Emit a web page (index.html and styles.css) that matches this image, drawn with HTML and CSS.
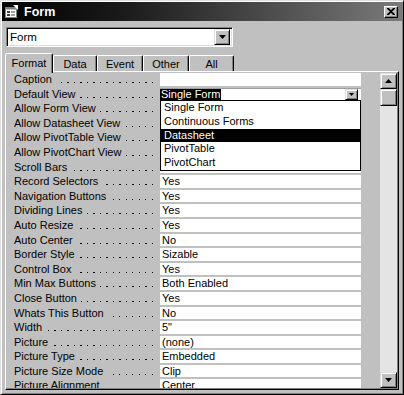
FILE: index.html
```html
<!DOCTYPE html>
<html lang="en">
<head>
    <meta charset="UTF-8">
    <title>Form</title>
    <link rel="stylesheet" href="styles.css">
</head>
<body>
    <div class="window">
        <div class="titlebar">
            <svg class="appicon" width="13" height="13" viewBox="0 0 13 13">
                <rect x="0.5" y="2.5" width="11" height="10" fill="#fff" stroke="#808080"/>
                <rect x="0.5" y="2.5" width="11" height="2" fill="#808080"/>
                <rect x="2" y="6" width="3" height="2" fill="#404040"/>
                <rect x="6" y="6" width="4" height="2" fill="#a0a0a0"/>
                <rect x="2" y="9" width="3" height="2" fill="#404040"/>
                <rect x="6" y="9" width="4" height="2" fill="#a0a0a0"/>
                <path d="M8 0h5v5z" fill="#fff"/>
            </svg>
            <span class="title">Form</span>
            <div class="closebtn">
                <svg width="8" height="7" viewBox="0 0 8 7"><path d="M0 0L7 7M1 0L8 7M7 0L0 7M8 0L1 7" stroke="#000" stroke-width="1.2"/></svg>
            </div>
        </div>

        <div class="content">
            <div class="objsel">
                <span class="objname">Form</span>
                <div class="btn3d ddbtn">
                    <svg width="7" height="4" viewBox="0 0 7 4"><path d="M0 0h7L3.5 4z" fill="#000"/></svg>
                </div>
            </div>

            <div class="tabs">
                <div class="tab on">Format</div>
                <div class="tab">Data</div>
                <div class="tab">Event</div>
                <div class="tab">Other</div>
                <div class="tab">All</div>
            </div>

            <div class="page">
                <div class="props">
                    <div class="row"><div class="name"><span>Caption</span></div><div class="val"></div></div>
                    <div class="row"><div class="name"><span>Default View</span></div>
                        <div class="val combo">
                            <span class="sel">Single Form</span>
                            <div class="btn3d minibtn">
                                <svg width="5" height="3" viewBox="0 0 5 3"><path d="M0 0h5L2.5 3z" fill="#000"/></svg>
                            </div>
                            <div class="list">
                                <div class="item">Single Form</div>
                                <div class="item">Continuous Forms</div>
                                <div class="item hl">Datasheet</div>
                                <div class="item">PivotTable</div>
                                <div class="item">PivotChart</div>
                            </div>
                        </div>
                    </div>
                    <!-- these values sit under the open list -->
                    <div class="row"><div class="name"><span>Allow Form View</span></div><div class="val"></div></div>
                    <div class="row"><div class="name"><span>Allow Datasheet View</span></div><div class="val"></div></div>
                    <div class="row"><div class="name"><span>Allow PivotTable View</span></div><div class="val"></div></div>
                    <div class="row"><div class="name"><span>Allow PivotChart View</span></div><div class="val"></div></div>
                    <div class="row"><div class="name"><span>Scroll Bars</span></div><div class="val">Both</div></div>
                    <div class="row"><div class="name"><span>Record Selectors</span></div><div class="val">Yes</div></div>
                    <div class="row"><div class="name"><span>Navigation Buttons</span></div><div class="val">Yes</div></div>
                    <div class="row"><div class="name"><span>Dividing Lines</span></div><div class="val">Yes</div></div>
                    <div class="row"><div class="name"><span>Auto Resize</span></div><div class="val">Yes</div></div>
                    <div class="row"><div class="name"><span>Auto Center</span></div><div class="val">No</div></div>
                    <div class="row"><div class="name"><span>Border Style</span></div><div class="val">Sizable</div></div>
                    <div class="row"><div class="name"><span>Control Box</span></div><div class="val">Yes</div></div>
                    <div class="row"><div class="name"><span>Min Max Buttons</span></div><div class="val">Both Enabled</div></div>
                    <div class="row"><div class="name"><span>Close Button</span></div><div class="val">Yes</div></div>
                    <div class="row"><div class="name"><span>Whats This Button</span></div><div class="val">No</div></div>
                    <div class="row"><div class="name"><span>Width</span></div><div class="val">5"</div></div>
                    <div class="row"><div class="name"><span>Picture</span></div><div class="val">(none)</div></div>
                    <div class="row"><div class="name"><span>Picture Type</span></div><div class="val">Embedded</div></div>
                    <div class="row"><div class="name"><span>Picture Size Mode</span></div><div class="val">Clip</div></div>
                    <div class="row"><div class="name"><span>Picture Alignment</span></div><div class="val">Center</div></div>
                </div>

                <div class="vscroll">
                    <div class="btn3d sbtn">
                        <svg width="7" height="4" viewBox="0 0 7 4"><path d="M0 4h7L3.5 0z" fill="#000"/></svg>
                    </div>
                    <div class="btn3d thumb"></div>
                    <div class="track"></div>
                    <div class="btn3d sbtn">
                        <svg width="7" height="4" viewBox="0 0 7 4"><path d="M0 0h7L3.5 4z" fill="#000"/></svg>
                    </div>
                </div>
            </div>
        </div>
    </div>
</body>
</html>
```

FILE: styles.css
```css
body{
    margin:0;
    background:#c0c0c0;
    font-family:"Liberation Sans", Arial, sans-serif;
    font-size:11px;
    color:#000;
}

.window{
    width:404px;
    height:395px;
    box-sizing:border-box;
    background:#c0c0c0;
    border:1px solid;
    border-color:#dfdfdf #000 #000 #dfdfdf;
    box-shadow:inset 1px 1px #fff, inset -1px -1px #808080;
    padding:1px;
    display:flex;
    flex-direction:column;
    overflow:hidden;
}

/* title bar */
.titlebar{
    height:19px;
    flex:none;
    display:flex;
    align-items:center;
    padding:0 3px 0 3px;
    background:linear-gradient(to right, #000 0%, #1a1a1a 30%, #7a7a7a 100%);
}
.appicon{
    margin-right:6px;
}
.title{
    color:#fff;
    font-weight:bold;
    font-size:12.5px;
    flex:1;
}
.closebtn{
    width:14px;
    height:12px;
    box-sizing:border-box;
    background:#c0c0c0;
    border:1px solid;
    border-color:#fff #000 #000 #fff;
    box-shadow:inset -1px -1px #808080;
    display:flex;
    align-items:center;
    justify-content:center;
    margin-right:1px;
}

.btn3d{
    box-sizing:border-box;
    background:#c0c0c0;
    border:1px solid;
    border-color:#dfdfdf #000 #000 #dfdfdf;
    box-shadow:inset 1px 1px #fff, inset -1px -1px #808080;
    display:flex;
    align-items:center;
    justify-content:center;
}

.content{
    flex:1;
    display:flex;
    flex-direction:column;
    padding:0 3px 3px 3px;
    min-height:0;
}

/* object selector */
.objsel{
    margin:6px 0 0 1px;
    width:227px;
    height:20px;
    box-sizing:border-box;
    background:#fff;
    border:1px solid;
    border-color:#808080 #fff #fff #808080;
    box-shadow:inset 1px 1px #000, inset -1px -1px #dfdfdf;
    display:flex;
    align-items:center;
    padding:2px 2px 2px 3px;
}
.objname{
    flex:1;
    font-size:11.5px;
}
.ddbtn{
    width:16px;
    height:16px;
}

/* tabs */
.tabs{
    margin-top:5px;
    height:20px;
    display:flex;
    align-items:flex-end;
    flex:none;
}
.tab{
    height:17px;
    width:44px;
    box-sizing:border-box;
    border:1px solid;
    border-bottom:none;
    border-color:#fff #000 transparent #fff;
    box-shadow:inset -1px 0 #808080;
    border-radius:2px 2px 0 0;
    text-align:center;
    line-height:16px;
}
.tab:nth-child(3),.tab:nth-child(4){
    width:46px;
}
.tab:nth-child(5){
    width:45px;
}
.tab.on{
    height:20px;
    width:48px;
    line-height:18px;
    position:relative;
    z-index:2;
    background:#c0c0c0;
    margin-bottom:-1px;
}

/* tab page */
.page{
    flex:1;
    min-height:0;
    margin-top:-1px;
    border:1px solid;
    border-color:#fff #000 #000 #fff;
    box-shadow:inset -1px -1px #808080;
    padding:1px;
    display:flex;
}
.props{
    flex:1;
    overflow:hidden;
}
.row{
    height:14.6px;
    display:flex;
}
.name{
    width:153px;
    box-sizing:border-box;
    padding:0 7px;
    height:12.6px;
    line-height:12.6px;
    display:flex;
    align-items:baseline;
    white-space:nowrap;
}
.name::after{
    content:"";
    flex:1;
    height:1px;
    margin-left:4px;
    background:repeating-linear-gradient(to left, #000 0 1.4px, transparent 1.4px 6.5px);
}
.val{
    width:201px;
    height:12.6px;
    line-height:12.6px;
    background:#fff;
    padding-left:2px;
    box-sizing:border-box;
    white-space:nowrap;
}

/* default view combo */
.combo{
    position:relative;
    padding-left:0;
    border-top:1px solid #a0a0a0;
    display:flex;
    align-items:center;
    line-height:11px;
}
.sel{
    background:#000;
    color:#fff;
    padding:0 1px;
    margin-right:auto;
}
.minibtn{
    width:13px;
    height:11px;
    margin-right:3px;
}
.list{
    position:absolute;
    left:0;
    top:100%;
    width:201px;
    box-sizing:border-box;
    border:1px solid #000;
    background:#fff;
    z-index:3;
    line-height:13.75px;
}
.item{
    height:13.75px;
    padding-left:3px;
}
.item.hl{
    background:#000;
    color:#fff;
}

/* scrollbar */
.vscroll{
    width:17px;
    display:flex;
    flex-direction:column;
    background:#e4e4e4;
}
.sbtn{
    height:16px;
    flex:none;
}
.thumb{
    height:17px;
    flex:none;
}
.track{
    flex:1;
}
```
